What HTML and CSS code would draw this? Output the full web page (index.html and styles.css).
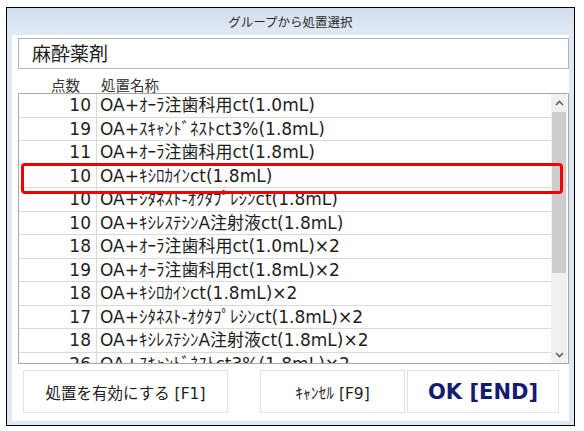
FILE: index.html
```html
<!DOCTYPE html>
<html lang="ja">
<head>
    <meta charset="UTF-8">
    <title>グループから処置選択</title>
    <link rel="stylesheet" href="styles.css">
</head>
<body>
    <div class="window">
        <div class="titlebar">グループから処置選択</div>

        <div class="content">
            <!-- グループ名 -->
            <div class="group-box">麻酔薬剤</div>

            <!-- 見出し -->
            <div class="list-head">
                <span class="head-score">点数</span>
                <span class="head-name">処置名称</span>
            </div>

            <!-- 処置リスト -->
            <div class="list">
                <div class="rows">
                    <div class="row"><span class="score">10</span><span class="name">OA+ｵｰﾗ注歯科用ct(1.0mL)</span></div>
                    <div class="row"><span class="score">19</span><span class="name">OA+ｽｷｬﾝﾄﾞﾈｽﾄct3%(1.8mL)</span></div>
                    <div class="row"><span class="score">11</span><span class="name">OA+ｵｰﾗ注歯科用ct(1.8mL)</span></div>
                    <div class="row"><span class="score">10</span><span class="name">OA+ｷｼﾛｶｲﾝct(1.8mL)</span></div>
                    <div class="row"><span class="score">10</span><span class="name">OA+ｼﾀﾈｽﾄ-ｵｸﾀﾌﾟﾚｼﾝct(1.8mL)</span></div>
                    <div class="row"><span class="score">10</span><span class="name">OA+ｷｼﾚｽﾃｼﾝA注射液ct(1.8mL)</span></div>
                    <div class="row"><span class="score">18</span><span class="name">OA+ｵｰﾗ注歯科用ct(1.0mL)×2</span></div>
                    <div class="row"><span class="score">19</span><span class="name">OA+ｵｰﾗ注歯科用ct(1.8mL)×2</span></div>
                    <div class="row"><span class="score">18</span><span class="name">OA+ｷｼﾛｶｲﾝct(1.8mL)×2</span></div>
                    <div class="row"><span class="score">17</span><span class="name">OA+ｼﾀﾈｽﾄ-ｵｸﾀﾌﾟﾚｼﾝct(1.8mL)×2</span></div>
                    <div class="row"><span class="score">18</span><span class="name">OA+ｷｼﾚｽﾃｼﾝA注射液ct(1.8mL)×2</span></div>
                    <div class="row"><span class="score">26</span><span class="name">OA+ｽｷｬﾝﾄﾞﾈｽﾄct3%(1.8mL)×2</span></div>
                </div>

                <!-- スクロールバー -->
                <div class="scrollbar">
                    <div class="arrow">
                        <svg width="9" height="6" viewBox="0 0 9 6"><path d="M1 5 L4.5 1.5 L8 5" fill="none" stroke="#606060" stroke-width="1.6"/></svg>
                    </div>
                    <div class="track"><div class="thumb"></div></div>
                    <div class="arrow">
                        <svg width="9" height="6" viewBox="0 0 9 6"><path d="M1 1 L4.5 4.5 L8 1" fill="none" stroke="#606060" stroke-width="1.6"/></svg>
                    </div>
                </div>

                <!-- 選択中の行 -->
                <div class="selected"></div>
            </div>

            <!-- ボタン -->
            <div class="buttons">
                <button class="btn btn-apply">処置を有効にする [F1]</button>
                <button class="btn btn-cancel">ｷｬﾝｾﾙ [F9]</button>
                <button class="btn btn-ok">OK [END]</button>
            </div>
        </div>
    </div>
</body>
</html>
```

FILE: styles.css
```css
/* ページ全体 */
body {
    margin: 0;
    background: #fff;
    font-family: 'DejaVu Sans', 'Noto Sans CJK JP', sans-serif;
    color: #1e1e1e;
}

/* ダイアログ枠 */
.window {
    margin: 7px 0 0 6px;
    width: 569px;
    height: 419px;
    box-sizing: border-box;
    border: 1px solid #000;
    background: #dfe8f5;
    display: flex;
    flex-direction: column;
}

.titlebar {
    height: 27px;
    line-height: 29px;
    text-align: center;
    font-size: 12.5px;
    color: #2a2a2a;
    background: linear-gradient(#d2deed, #e1e9f4);
}

.content {
    flex: 1;
    margin: 0 5px 4px 5px;
    padding: 3px 0 0 6px;
    background: #fff;
    display: flex;
    flex-direction: column;
}

/* グループ名 */
.group-box {
    height: 31px;
    box-sizing: border-box;
    border: 1px solid #b4b6bb;
    padding-left: 13px;
    font-size: 19px;
    line-height: 30px;
}

/* 見出し */
.list-head {
    height: 24px;
    display: flex;
    font-size: 14.5px;
    line-height: 16px;
    padding-top: 9px;
    box-sizing: border-box;
    color: #333;
}

.head-score {
    width: 62px;
    text-align: right;
}

.head-name {
    padding-left: 21px;
}

/* リスト */
.list {
    position: relative;
    height: 271px;
    box-sizing: border-box;
    border: 1px solid #a9a9a9;
    display: flex;
    overflow: hidden;
}

.rows {
    flex: 1;
    overflow: hidden;
}

.row {
    height: 23.5px;
    box-sizing: border-box;
    border-bottom: 1px solid #dadada;
    display: flex;
    font-size: 17px;
    line-height: 23px;
    white-space: nowrap;
}

.score {
    width: 78px;
    box-sizing: border-box;
    padding-right: 5px;
    text-align: right;
    border-right: 1px solid #dadada;
}

.name {
    padding-left: 3px;
}

/* スクロールバー */
.scrollbar {
    width: 16px;
    margin-right: 1px;
    background: #f0f0f0;
    display: flex;
    flex-direction: column;
}

.arrow {
    height: 17px;
    display: flex;
    justify-content: center;
    align-items: center;
}

.track {
    flex: 1;
    padding: 1px 1px 0 1px;
}

.thumb {
    height: 161px;
    background: #cdcdcd;
}

/* 選択枠 */
.selected {
    position: absolute;
    left: 2px;
    top: 69px;
    width: 542px;
    height: 31px;
    box-sizing: border-box;
    border: 3px solid #f00000;
    border-radius: 4px;
}

/* ボタン */
.buttons {
    display: flex;
    margin-top: 6px;
    padding-left: 5px;
}

.btn {
    height: 43px;
    background: #fff;
    border: 1px solid #e3e3e3;
    font-family: 'DejaVu Sans', 'Noto Sans CJK JP', sans-serif;
    font-size: 15.5px;
    color: #1e1e1e;
    padding: 0;
    cursor: pointer;
}

.btn-apply {
    width: 205px;
}

.btn-cancel {
    width: 145px;
    margin-left: 32px;
}

.btn-ok {
    width: 152px;
    margin-left: 2px;
    font-size: 21px;
    font-weight: bold;
    color: #131c70;
}
```
